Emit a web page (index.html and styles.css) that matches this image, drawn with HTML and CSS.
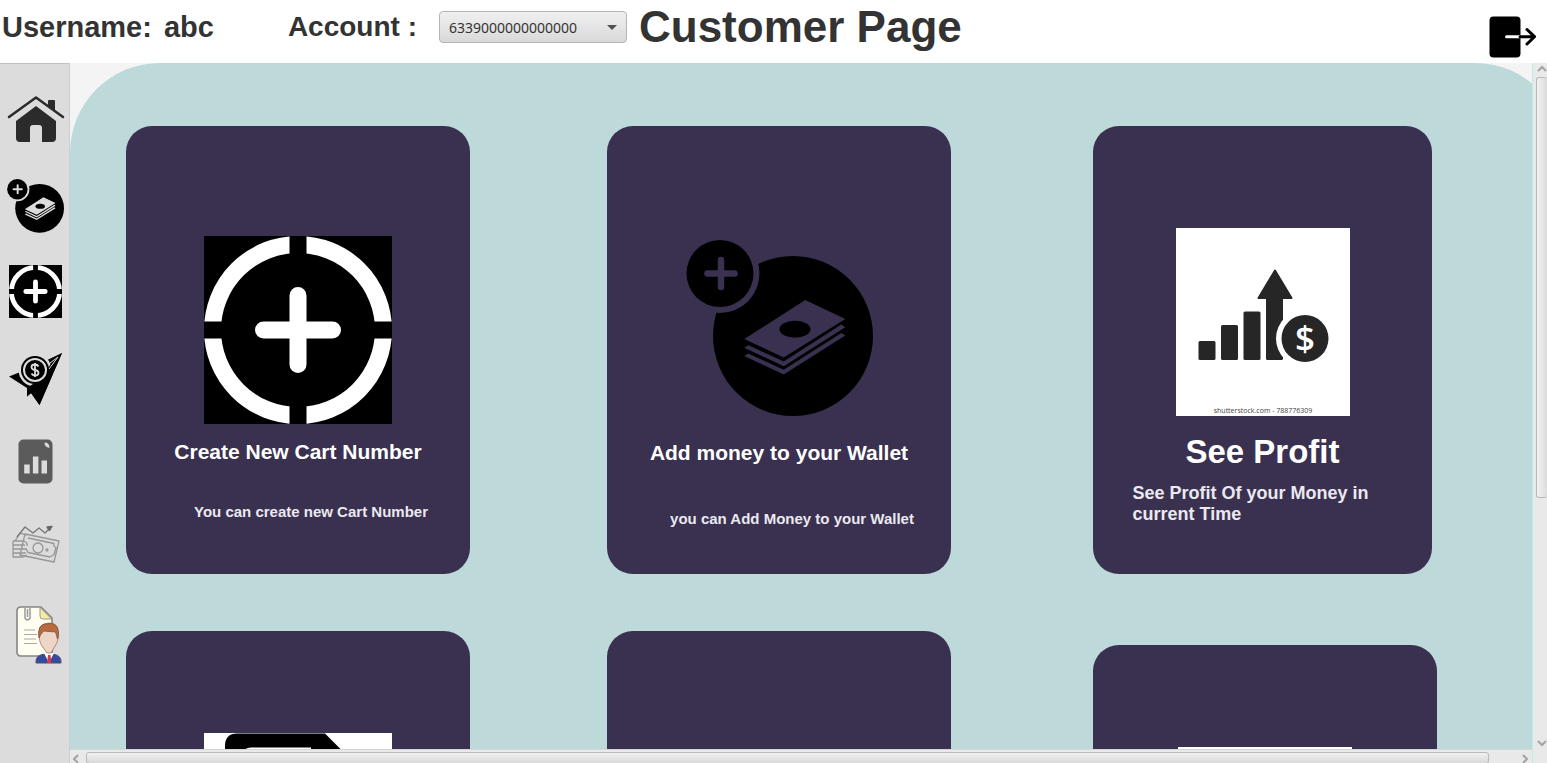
FILE: index.html
```html
<!DOCTYPE html>
<html lang="en">
<head>
<meta charset="utf-8">
<title>Customer Page</title>
<link rel="stylesheet" href="styles.css">
</head>
<body>
<svg class="defs" aria-hidden="true">
  <symbol id="wallet" viewBox="0 0 187 177">
    <circle cx="107" cy="96" r="80"/>
    <circle cx="34" cy="33.5" r="39.5" fill="currentColor"/>
    <circle cx="34" cy="33.5" r="33.5"/>
    <path d="M35 20v27M21.500 33.500h27" stroke="currentColor" stroke-width="6.500" stroke-linecap="round"/>
    <path fill="currentColor" d="M119.300 60l40 19-61.600 38.500-39.400-18.500zM58.300 107.700l4-2.500 35.400 16.200 57.600-36.800 4 2.700-61.600 39zM58.300 116l4-2.500 35.400 16.200 57.600-36.800 4 2.700-61.600 39z"/>
    <ellipse cx="109" cy="89.300" rx="15.500" ry="8.500"/>
  </symbol>
  <symbol id="target" viewBox="0 0 188 188">
    <path d="M0 0h188v188H0z"/>
    <circle cx="94" cy="94" r="85.500" fill="none" stroke="#fff" stroke-width="17"/>
    <path d="M94 0v188M0 94h188" stroke="#000" stroke-width="17"/>
    <path d="M94 59.500v69M59.500 94h69" stroke="#fff" stroke-width="17" stroke-linecap="round"/>
  </symbol>
</svg>

<header class="topbar">
  <div class="account-bar">
    <span class="user-label">Username:</span>
    <span class="user-name">abc</span>
    <label class="account-label" for="account">Account :</label>
    <span class="select-wrap">
      <select id="account" class="account"><option>6339000000000000</option></select>
    </span>
    <h1 class="title">Customer Page</h1>
  </div>
  <button class="logout" type="button" aria-label="Log out">
    <svg width="48" height="42" viewBox="0 0 48 42">
      <rect x="0.500" y="0.500" width="31" height="41" rx="4"/>
      <path d="M17.500 20.700H31" stroke="#fff" stroke-width="3" stroke-linecap="round"/>
      <path d="M31 20.700h14M38 13.500l7.500 7.200-7.500 7.300" fill="none" stroke="#000" stroke-width="3" stroke-linecap="round" stroke-linejoin="round"/>
    </svg>
  </button>
</header>

<div class="body">
  <nav class="sidebar" aria-label="Main">
    <button class="nav-item" type="button" aria-label="Home">
      <svg viewBox="0 77 70 86">
        <path d="M16 121L36 106l20 15v17q0 4-4 4H42v-14q0-3-3-3h-6q-3 0-3 3v14H20q-4 0-4-4z" fill="#2b2b2b"/>
        <path d="M48 106v-5q0-1 1-1h5q1 0 1 1v10z" fill="#2b2b2b"/>
        <path d="M9 117L36 97.500 63 117" fill="none" stroke="#2b2b2b" stroke-width="2.500" stroke-linecap="round" stroke-linejoin="round"/>
      </svg>
    </button>
    <button class="nav-item" type="button" aria-label="Add money">
      <svg viewBox="0 163 70 86"><use href="#wallet" x="7" y="179" width="57" height="54"/></svg>
    </button>
    <button class="nav-item" type="button" aria-label="Create cart number">
      <svg viewBox="0 249 70 86"><use href="#target" x="9" y="265" width="53" height="53"/></svg>
    </button>
    <button class="nav-item" type="button" aria-label="Send money">
      <svg viewBox="0 335 70 86">
        <path d="M62 353L39.500 405 31 393l-4 3.500V388L9 376.500 28 369z"/>
        <circle cx="35" cy="370" r="16.500" fill="#dcdcdc"/>
        <path d="M62 353L39.500 405 31 393l-4 3.500V388l12-8 9-12 8-11z"/>
        <circle cx="35" cy="370" r="14" fill="#000"/>
        <circle cx="35" cy="370" r="11" stroke="#dcdcdc" stroke-width="2"/>
        <path d="M38.500 366.500q-1-2-3.500-2-3.500 0-3.500 2.500t3.500 3 3.500 3-3.500 2.500q-2.500 0-3.500-2M35 363v14" fill="none" stroke="#dcdcdc" stroke-width="1.800"/>
        <path d="M50 363l8-6-9 12" fill="none" stroke="#dcdcdc"/>
      </svg>
    </button>
    <button class="nav-item" type="button" aria-label="Reports">
      <svg viewBox="0 421 70 86">
        <rect x="18.500" y="439.500" width="34" height="44" rx="5" fill="#5b5b5b"/>
        <path d="M44.500 442.500q5 0 5 5.500-5-1-5-5.500z" fill="#dcdcdc"/>
        <path d="M24.200 464.500h5.500v9h-5.500zM32.900 456.500h5.500v17h-5.500zM41.500 460.500h5.500v13h-5.500z" fill="#dcdcdc"/>
      </svg>
    </button>
    <button class="nav-item" type="button" aria-label="Profit">
      <svg viewBox="0 507 70 86" fill="none" stroke="#979797" stroke-width="1.300" stroke-linejoin="round">
        <path d="M25 534l34 7-5 21-34-7zM28 538l26 5.500q-1 3 2 4l-2 7-4 2.500-22-4.500-2-4"/>
        <circle cx="38" cy="548" r="5"/><circle cx="47" cy="550" r="1"/>
        <path d="M13 541h11q4 2 3 5M13 541v16h10l4-2M13 545h12M13 549h13M13 553h13M15 541l5-8 7 2"/>
        <path d="M17 537l8-10 8 6 6-5 6 5 4-4" stroke="#777"/>
        <path d="M47 527l5-.5-2.500 4z" fill="#666" stroke="#666"/>
      </svg>
    </button>
    <button class="nav-item" type="button" aria-label="Customer details">
      <svg viewBox="0 593 70 86">
        <path d="M21 607h20l11 11v38H21q-4 0-4-4v-41q0-4 4-4z" fill="#fffef0" stroke="#858585" stroke-width="1.600"/>
        <path d="M40 607.500l11.500 11.500H43q-3 0-3-3z" fill="#f5ee9b" stroke="#999"/>
        <path d="M25 608v10q2.500 4 5 0v-11M27.500 609v8" fill="none" stroke="#999" stroke-width="1.500"/>
        <path d="M24 630h11M24 634.500h13M24 639h12M24 643.500h13" stroke="#aaa" stroke-width="1.200"/>
        <path d="M36 663q-1-8 9-9h7q10 1 9 9z" fill="#3449a0" stroke="#444c72"/>
        <path d="M44 653h10l-5 10z" fill="#fff"/>
        <path d="M48 655h2.500l1 8h-4.500z" fill="#d33b4b"/>
        <path d="M39 633q0-10 10-10t9 10q1 8-3 13l-4 7h-4l-5-7q-3-4-3-13z" fill="#edd6c8" stroke="#a7745b" stroke-width=".8"/>
        <path d="M39 638q-2-14 7-14 11-3 12.500 8 .5 4-1 7l-2-7-12-1-3 4z" fill="#ba6a3d" stroke="#7a5544" stroke-width=".8"/>
      </svg>
    </button>
  </nav>

  <main class="viewport">
    <div class="panel">
      <section class="card">
        <svg class="art" width="188" height="188"><use href="#target" width="188" height="188"/></svg>
        <h2 class="card-title">Create New Cart Number</h2>
        <p class="card-text">You can create new Cart Number</p>
      </section>
      <section class="card card-wallet">
        <svg class="art" width="187" height="177"><use href="#wallet" width="187" height="177"/></svg>
        <h2 class="card-title">Add money to your Wallet</h2>
        <p class="card-text">you can Add Money to your Wallet</p>
      </section>
      <section class="card card-profit">
        <svg class="art" width="174" height="188" viewBox="0 0 174 188">
          <path d="M0 0h174v188H0z" fill="#fff"/>
          <g fill="#262626">
            <rect x="22.500" y="113" width="17" height="19" rx="1.500"/>
            <rect x="45" y="97" width="17" height="35" rx="1.500"/>
            <rect x="67.500" y="83.500" width="17" height="48.500" rx="1.500"/>
            <rect x="90" y="66" width="17" height="66" rx="1.500"/>
            <path d="M99 42.500L115.500 70h-33z" stroke="#262626" stroke-width="2" stroke-linejoin="round"/>
          </g>
          <circle cx="129" cy="110.500" r="29" fill="#fff"/>
          <circle cx="129" cy="110.500" r="23.500" fill="#262626"/>
          <text class="dollar" x="129" y="123" text-anchor="middle">$</text>
          <text class="credit" x="87" y="185" text-anchor="middle">shutterstock.com - 788776309</text>
        </svg>
        <h2 class="card-title">See Profit</h2>
        <p class="card-text">See Profit Of your Money in current Time</p>
      </section>
      <section class="card card-next">
        <svg class="art" width="188" height="188" viewBox="0 0 188 188">
          <path d="M0 0h188v188H0z" fill="#fff"/>
          <path d="M33 .5h88l45 45v130q0 12-12 12H33q-12 0-12-12V13Q21 .5 33 .5z"/>
          <path d="M47 14.500h60v40h42v118H39v-150q0-8 8-8z" fill="#fff"/>
        </svg>
      </section>
      <section class="card card-next"></section>
      <section class="card card-next card-low">
        <svg class="art" width="174" height="188" viewBox="0 0 174 188"><path d="M0 0h174v188H0z" fill="#fff"/></svg>
      </section>
    </div>
  </main>

  <div class="bar bar-v">
    <svg width="14" height="14" viewBox="0 0 14 14"><path d="M5 8l4-4 4 4"/></svg>
    <div class="track"><div class="thumb"></div></div>
    <svg width="14" height="14" viewBox="0 0 14 14"><path d="M5 6l4 4 4-4"/></svg>
  </div>
  <div class="bar bar-h">
    <svg width="14" height="14" viewBox="0 0 14 14"><path d="M8 5L4 9l4 4"/></svg>
    <div class="track"><div class="thumb"></div></div>
    <svg width="14" height="14" viewBox="0 0 14 14"><path d="M5 5l4 4-4 4"/></svg>
  </div>
  <div class="corner"></div>
</div>
</body>
</html>
```

FILE: styles.css
```css
* { box-sizing: border-box; }

body {
  margin: 0;
  height: 100vh;
  display: flex;
  flex-direction: column;
  overflow: hidden;
  background: #fff;
  color: #333;
  font-family: "Liberation Sans", Arial, sans-serif;
  font-weight: bold;
}

h1, h2, p { margin: 0; }

button {
  padding: 0;
  border: 0;
  background: none;
  cursor: pointer;
}

svg { display: block; }

.defs {
  position: absolute;
  width: 0;
  height: 0;
}

.topbar {
  flex: none;
  min-height: 63px;
  display: flex;
  align-items: flex-end;
  justify-content: space-between;
  padding: 0 10px 5px 2px;
  white-space: nowrap;
}

.account-bar {
  display: flex;
  align-items: center;
  padding-bottom: 6px;
}

.user-label, .user-name { font-size: 29px; }
.user-name { margin-left: 12px; }

.account-label {
  margin-left: 74px;
  font-size: 28px;
}

.select-wrap {
  position: relative;
  margin-left: 22px;
}

.select-wrap::after {
  content: "";
  position: absolute;
  right: 10px;
  top: 14px;
  border: 5px solid transparent;
  border-top-color: #505050;
  border-bottom: 0;
  pointer-events: none;
}

.account {
  display: block;
  appearance: none;
  width: 188px;
  height: 32px;
  padding: 0 9px;
  border: 1px solid #b5b5b5;
  border-radius: 4px;
  background: linear-gradient(#f0f0f0, #d9d9d9);
  color: #333;
  font: 14px "Noto Sans", sans-serif;
}

.title {
  margin-left: 12px;
  font-size: 44px;
  line-height: 50px;
}

.body {
  flex: 1;
  min-height: 0;
  display: grid;
  grid-template: minmax(0, 1fr) 14px / 70px minmax(0, 1fr) 15px;
}

.sidebar {
  grid-row: 1 / 3;
  display: flex;
  flex-direction: column;
  padding-top: 13px;
  overflow: hidden;
  background: #dcdcdc;
  border-top: 1px solid #c0c0c0;
  border-right: 1px solid #cecece;
}

.nav-item {
  flex: 0 0 86px;
  color: #dcdcdc;
}

.nav-item svg {
  width: 70px;
  height: 86px;
}

.viewport {
  overflow: hidden;
  background: #f4f4f4;
}

.panel {
  width: calc(100% + 33px);
  min-height: 1070px;
  display: grid;
  grid-template-columns: 481fr 486fr 472fr;
  align-content: start;
  row-gap: 57px;
  padding: 63px 0 63px 56px;
  border-radius: 90px;
  background: #bed9da;
}

.card {
  width: 344px;
  height: 448px;
  display: flex;
  flex-direction: column;
  align-items: center;
  padding-top: 110px;
  border-radius: 26px;
  background: #3a3150;
  color: #fff;
}

.art {
  flex: none;
  color: #3a3150;
}

.card-title {
  margin-top: 16px;
  font-size: 21px;
  line-height: 24px;
}

.card-text {
  margin-top: 38px;
  padding-left: 26px;
  color: #ebe9ef;
  font-size: 15px;
  line-height: 20px;
}

.card-wallet { padding-top: 114px; }
.card-wallet .card-title { margin-top: 24px; }
.card-wallet .card-text { margin-top: 44px; }

.card-profit {
  width: 339px;
  padding-top: 102px;
}

.card-profit .card-title {
  font-size: 33px;
  line-height: 40px;
}

.card-profit .card-text {
  width: 260px;
  margin-top: 11px;
  padding: 0;
  font-size: 18px;
  line-height: 21px;
}

.card-next { padding-top: 102px; }
.card-low { margin-top: 14px; }

.dollar {
  fill: #fff;
  font: 600 35px "Open Sans", sans-serif;
}

.credit {
  fill: #444;
  font: 7px "Open Sans", sans-serif;
}

.bar {
  display: flex;
  background: #e9e9e9;
}

.bar svg {
  flex: none;
  fill: none;
  stroke: #a3a3a3;
  stroke-width: 2;
}

.track { flex: 1; }

.thumb {
  border: 1px solid #bababa;
  border-radius: 3px;
}

.bar-v {
  flex-direction: column;
  border-left: 1px solid #b8efeb;
}

.bar-v .thumb {
  height: 64%;
  margin-left: 3px;
  border-right: 0;
  background: linear-gradient(90deg, #f1f1f1, #dcdcdc);
}

.bar-h {
  grid-column: 2;
  border-top: 1px solid #d5d5d5;
}

.bar-h .track { padding: 2px 0 0 2px; }

.bar-h .thumb {
  width: 98%;
  height: 12px;
  background: linear-gradient(#f1f1f1, #d9d9d9);
}

.corner {
  background: #e9e9e9;
  border-left: 1px solid #b8efeb;
}
```
